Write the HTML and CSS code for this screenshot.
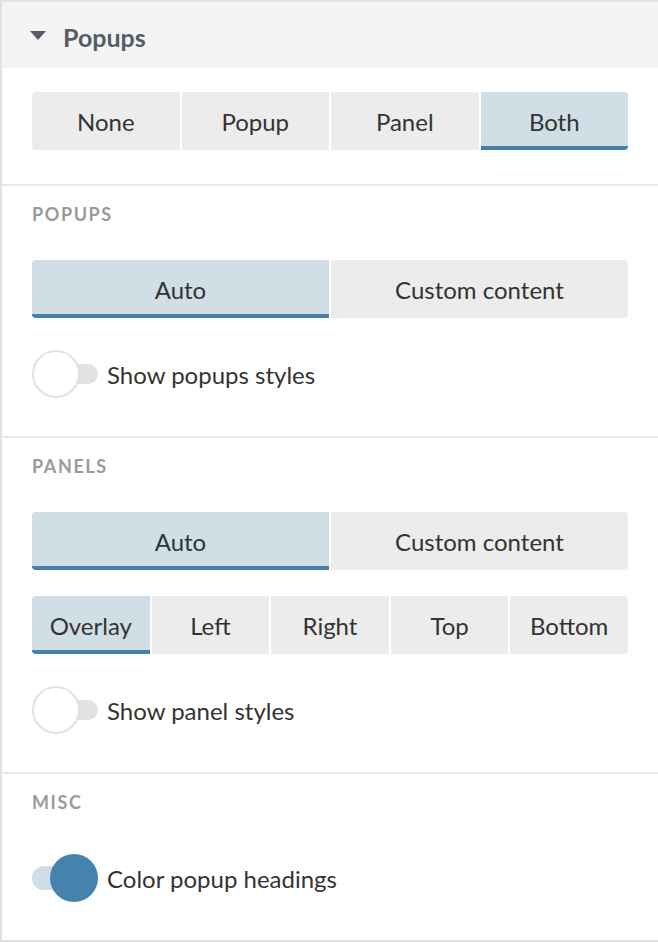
FILE: index.html
```html
<!DOCTYPE html>
<html>
<head>
<meta charset="utf-8">
<link rel="stylesheet" href="styles.css">
</head>
<body>
<div class="panel">
  <div class="header">
    <svg class="caret" width="16" height="9" viewBox="0 0 16 9"><path d="M0 0 H16 L8 9 Z" fill="#555d66"/></svg>
    <span class="header-title">Popups</span>
  </div>
  <div class="section first">
    <div class="seg">
      <div class="seg-btn">None</div>
      <div class="seg-btn">Popup</div>
      <div class="seg-btn">Panel</div>
      <div class="seg-btn active">Both</div>
    </div>
  </div>
  <div class="section">
    <div class="label">POPUPS</div>
    <div class="seg mt-label">
      <div class="seg-btn active">Auto</div>
      <div class="seg-btn">Custom content</div>
    </div>
    <div class="toggle-row mt-toggle">
      <span class="toggle"><span class="track"></span><span class="knob"></span></span>
      <span class="toggle-text">Show popups styles</span>
    </div>
  </div>
  <div class="section">
    <div class="label">PANELS</div>
    <div class="seg mt-label">
      <div class="seg-btn active">Auto</div>
      <div class="seg-btn">Custom content</div>
    </div>
    <div class="seg mt-seg">
      <div class="seg-btn active">Overlay</div>
      <div class="seg-btn">Left</div>
      <div class="seg-btn">Right</div>
      <div class="seg-btn">Top</div>
      <div class="seg-btn">Bottom</div>
    </div>
    <div class="toggle-row mt-toggle">
      <span class="toggle"><span class="track"></span><span class="knob"></span></span>
      <span class="toggle-text">Show panel styles</span>
    </div>
  </div>
  <div class="section last">
    <div class="label">MISC</div>
    <div class="toggle-row mt-misc">
      <span class="toggle on"><span class="track"></span><span class="knob"></span></span>
      <span class="toggle-text">Color popup headings</span>
    </div>
  </div>
</div>
</body>
</html>
```
FILE: styles.css
```css
html, body {
  margin: 0;
  padding: 0;
  background: #fff;
}
body {
  font-family: Lato, "Liberation Sans", sans-serif;
  color: #333;
  overflow: hidden;
}
.panel {
  width: 658px;
  height: 942px;
  box-sizing: border-box;
  border-top: 2px solid #e1e1e1;
  border-left: 2px solid #e1e1e1;
  border-bottom: 2px solid #e1e1e1;
}
.header {
  height: 66px;
  background: #f4f4f4;
  display: flex;
  align-items: center;
  padding-left: 28px;
}
.caret {
  display: block;
  margin-right: 17px;
  margin-top: 0;
}
.header-title {
  font-size: 25px;
  font-weight: 700;
  color: #545c64;
  margin-top: 3px;
}
.section {
  padding: 14px 30px 38px 30px;
  border-bottom: 2px solid #e8e8e8;
}
.section.first {
  padding-top: 24px;
  padding-bottom: 34px;
}
.section.last {
  border-bottom: none;
}
.label {
  height: 24px;
  line-height: 28px;
  font-size: 18px;
  font-weight: 700;
  color: #9a9a9a;
  letter-spacing: 1.6px;
}
.seg {
  display: flex;
  gap: 2px;
  border-radius: 4px;
  overflow: hidden;
  height: 58px;
}
.seg-btn {
  flex: 1;
  background: #ececec;
  display: flex;
  align-items: center;
  justify-content: center;
  font-size: 24px;
  color: #333;
}
.seg-btn.active {
  background: #d0dee6;
  box-shadow: inset 0 -4px 0 #4482ad;
}
.mt-label { margin-top: 36px; }
.mt-seg { margin-top: 26px; }
.mt-toggle { margin-top: 32px; }
.mt-misc { margin-top: 42px; }
.toggle-row {
  display: flex;
  align-items: center;
  height: 48px;
}
.toggle {
  position: relative;
  width: 66px;
  height: 48px;
  margin-right: 9px;
  flex: none;
}
.track {
  position: absolute;
  left: 0;
  right: 0;
  top: 14px;
  height: 20px;
  border-radius: 10px;
  background: #e2e2e2;
}
.knob {
  position: absolute;
  left: 0;
  top: 0;
  width: 48px;
  height: 48px;
  box-sizing: border-box;
  border-radius: 50%;
  background: #fff;
  border: 2px solid #e2e2e2;
}
.toggle.on .track {
  top: 12px;
  height: 24px;
  border-radius: 12px;
  background: #cfdde6;
}
.toggle.on .knob {
  left: 18px;
  background: #4682ae;
  border: none;
}
.toggle-text {
  font-size: 24px;
  color: #333;
}
```
